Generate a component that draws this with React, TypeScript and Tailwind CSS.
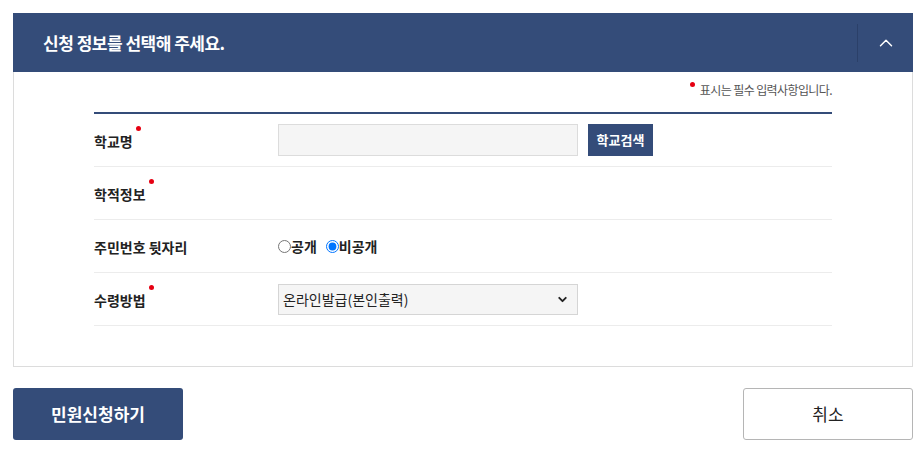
import { ChevronUp, ChevronDown } from 'lucide-react';

const font = { fontFamily: '"Noto Sans CJK KR", "Noto Sans", sans-serif' };

function Label({ text, required }: { text: string; required?: boolean }) {
  return (
    <div className="w-[184px] shrink-0">
      <span className="relative text-[14px] font-bold text-[#222]">
        {text}
        {required && (
          <span className="absolute -right-[8px] -top-[5px] h-[5px] w-[5px] rounded-full bg-[#e60012]" />
        )}
      </span>
    </div>
  );
}

export default function App() {
  return (
    <div className="bg-white pl-[13px] pr-[11px] pt-[13px]" style={font}>
      <section>
        <header className="flex h-[59px] items-center bg-[#344c79]">
          <h2 className="flex-1 pl-[30px] text-[17px] font-bold tracking-[-0.5px] text-white">
            신청 정보를 선택해 주세요.
          </h2>
          <div className="h-[38px] w-px bg-[#2b4069]" />
          <button className="flex w-[55px] items-center justify-center text-white">
            <ChevronUp size={22} strokeWidth={1.6} />
          </button>
        </header>

        <div className="border border-t-0 border-[#dcdcdc] px-[80px] pb-[40px] pt-[9px]">
          <p className="flex justify-end text-[12px] tracking-[-0.6px] text-[#555]">
            <span className="relative pl-[10px]">
              <span className="absolute left-0 top-[1px] h-[5px] w-[5px] rounded-full bg-[#e60012]" />
              표시는 필수 입력사항입니다.
            </span>
          </p>

          <div className="mt-[13px] border-t-2 border-[#344c79]">
            <div className="flex h-[53px] items-center border-b border-[#ececec]">
              <Label text="학교명" required />
              <input className="h-[32px] w-[300px] border border-[#dcdcdc] bg-[#f5f5f5]" />
              <button className="ml-[10px] h-[32px] w-[65px] bg-[#344c79] text-[13px] font-bold text-white">
                학교검색
              </button>
            </div>
            <div className="flex h-[53px] items-center border-b border-[#ececec]">
              <Label text="학적정보" required />
            </div>
            <div className="flex h-[53px] items-center border-b border-[#ececec]">
              <Label text="주민번호 뒷자리" />
              <label className="flex items-center text-[14px] font-bold text-[#222]">
                <input type="radio" name="rrn" className="m-0 h-[13px] w-[13px]" />
                공개
              </label>
              <label className="ml-[9px] flex items-center text-[14px] font-bold text-[#222]">
                <input type="radio" name="rrn" defaultChecked className="m-0 h-[13px] w-[13px]" />
                비공개
              </label>
            </div>
            <div className="flex h-[53px] items-center border-b border-[#ececec]">
              <Label text="수령방법" required />
              <div className="flex h-[31px] w-[300px] items-center justify-between border border-[#d5d5d5] bg-[#f5f5f5] pl-[4px] pr-[8px] text-[14px] text-[#222]">
                <span>온라인발급(본인출력)</span>
                <ChevronDown size={13} strokeWidth={3.5} />
              </div>
            </div>
          </div>
        </div>
      </section>

      <div className="mt-[21px] flex justify-between">
        <button className="h-[52px] w-[170px] rounded-[3px] bg-[#344c79] text-[17px] font-bold text-white">
          민원신청하기
        </button>
        <button className="h-[52px] w-[170px] rounded-[3px] border border-[#b5b5b5] bg-white text-[17px] text-[#222]">
          취소
        </button>
      </div>
    </div>
  );
}
